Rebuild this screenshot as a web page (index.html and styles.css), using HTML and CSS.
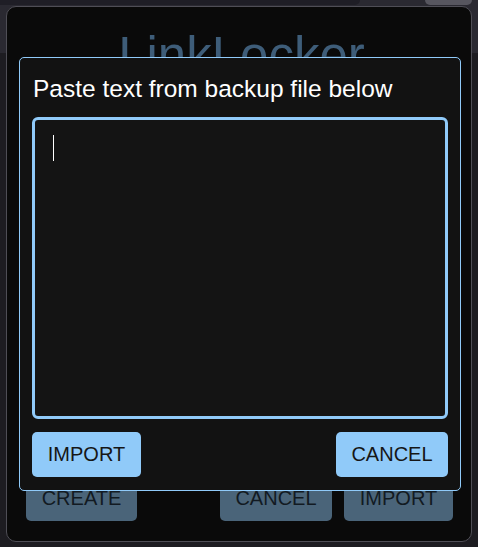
FILE: index.html
```html
<!DOCTYPE html>
<html lang="en">
<head>
<meta charset="utf-8">
<title>LinkLocker</title>
<link rel="stylesheet" href="styles.css">
</head>
<body>
<header class="appbar">
  <div class="appbar-track"></div>
  <div class="appbar-pill"></div>
</header>

<section class="dialog">
  <h1 class="dialog-title">LinkLocker</h1>
  <div class="dialog-spacer"></div>
  <div class="dialog-actions">
    <button class="btn btn-dim">CREATE</button>
    <div class="dialog-actions-right">
      <button class="btn btn-dim btn-wide">CANCEL</button>
      <button class="btn btn-dim">IMPORT</button>
    </div>
  </div>
</section>

<section class="modal">
  <h2 class="modal-title">Paste text from backup file below</h2>
  <div class="textbox"><span class="caret"></span></div>
  <div class="modal-actions">
    <button class="btn btn-primary">IMPORT</button>
    <button class="btn btn-primary">CANCEL</button>
  </div>
</section>
</body>
</html>
```

FILE: styles.css
```css
html, body {
  margin: 0;
  padding: 0;
}

body {
  width: 478px;
  height: 547px;
  background: #1d1c21;
  font-family: "Liberation Sans", Arial, sans-serif;
  overflow: hidden;
  position: relative;
}

.appbar {
  height: 53px;
  background: #2a2931;
  display: flex;
  align-items: flex-start;
}

.appbar-track {
  width: 360px;
  height: 5px;
  background: #1f1e26;
  border-bottom-right-radius: 6px;
}

.appbar-pill {
  width: 47px;
  height: 5px;
  margin-left: 65px;
  background: #57565f;
  border-bottom-left-radius: 7px;
  border-bottom-right-radius: 7px;
}

.dialog {
  position: absolute;
  left: 6px;
  top: 6px;
  width: 466px;
  height: 536px;
  box-sizing: border-box;
  border: 1px solid #4f4e56;
  border-radius: 10px;
  background: #0a0a0a;
  padding: 19px 18px 20px 19px;
  display: flex;
  flex-direction: column;
}

.dialog-title {
  margin: 0;
  font-weight: 400;
  font-size: 51px;
  line-height: 60px;
  color: #3e5d79;
  text-align: center;
  padding-left: 4px;
}

.dialog-spacer {
  flex: 1;
}

.dialog-actions {
  display: flex;
  justify-content: space-between;
  align-items: center;
}

.dialog-actions-right {
  display: flex;
  gap: 12px;
}

.btn {
  font-family: "Liberation Sans", Arial, sans-serif;
  font-size: 20px;
  height: 45px;
  border: 0;
  border-radius: 5px;
  padding: 0 15px;
  color: #141414;
  display: flex;
  align-items: center;
  justify-content: center;
}

.btn-dim {
  background: #4a6479;
  color: #121a22;
  min-width: 109px;
}

.btn-dim.btn-wide {
  min-width: 112px;
}

.dialog-actions > .btn-dim {
  min-width: 111px;
}

.btn-primary {
  background: #90caf9;
  color: #161616;
  padding: 0 15px;
  min-width: 109px;
}

.modal-actions .btn-primary:last-child {
  min-width: 112px;
}

.modal {
  position: absolute;
  left: 19px;
  top: 57px;
  width: 442px;
  height: 434px;
  box-sizing: border-box;
  border: 1px solid #90caf9;
  border-radius: 5px;
  background: #121212;
  padding: 17px 12px 12px 12px;
  display: flex;
  flex-direction: column;
}

.modal-title {
  margin: 0 0 14px 0;
  font-weight: 400;
  font-size: 24.5px;
  line-height: 28px;
  color: #ffffff;
  padding-left: 1px;
}

.textbox {
  height: 302px;
  box-sizing: border-box;
  border: 3px solid #90caf9;
  border-radius: 6px;
  background: #141414;
  padding: 15px 18px;
  display: flex;
  align-items: flex-start;
}

.caret {
  display: block;
  width: 1px;
  height: 26px;
  background: #ffffff;
}

.modal-actions {
  margin-top: 13px;
  display: flex;
  justify-content: space-between;
}
```
